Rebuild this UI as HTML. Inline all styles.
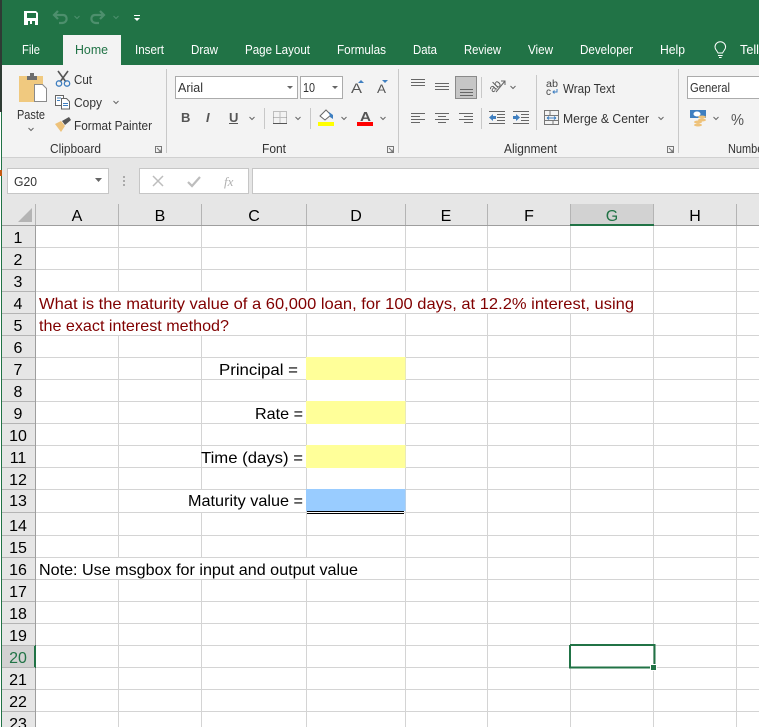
<!DOCTYPE html>
<html><head><meta charset="utf-8">
<style>
html,body{margin:0;padding:0;background:#fff;width:759px;height:727px;overflow:hidden}
svg{display:block}
text{font-family:"Liberation Sans",Arial,sans-serif}
.t{font-size:12.500px;fill:#fff}
.r{font-size:12.500px;fill:#333}
.g{font-size:16px;fill:#000}
.c{font-size:16px;fill:#000;text-anchor:middle}
.m{font-size:16px;fill:#800000}
.ch{fill:none;stroke:#666;stroke-width:1}
.ln{fill:none;stroke:#666;stroke-width:1}
</style></head>
<body>
<svg width="759" height="727" viewBox="0 0 759 727" xmlns="http://www.w3.org/2000/svg">
<!-- title + tabs -->
<rect width="759" height="65" fill="#217346"/>
<rect x="0" y="0" width="2" height="112" fill="#2e3b34"/>
<rect x="63" y="35" width="58" height="30" fill="#f3f3f3"/>
<!-- QAT -->
<path d="M24 11h12l2 2v12H24z" fill="#fff"/>
<path d="M27 13h9v5h-9z" fill="#217346"/>
<path d="M28 21h7v4h-7z" fill="#217346"/><path d="M30 21h2v3h-2z" fill="#fff"/>
<path d="M58 11l-4 4 4 4M54 15h9c5 0 5 8-1 8h-3" fill="none" stroke="#4d8f6d" stroke-width="2.200"/>
<path d="M100 11l4 4-4 4M104 15h-9c-5 0-5 8 1 8h3" fill="none" stroke="#4d8f6d" stroke-width="2.200"/>
<path d="M74.500 16l2.500 2.500 2.500-2.500M113.500 16l2.500 2.500 2.500-2.500" fill="none" stroke="#4d8f6d" stroke-width="1"/>
<rect x="134" y="15" width="6" height="1" fill="#fff"/><path d="M134 18h6l-3 3z" fill="#fff"/>
<!-- tabs text -->
<text class="t" x="22" y="54" textLength="18" lengthAdjust="spacingAndGlyphs">File</text>
<text class="t" x="75" y="54" textLength="33" lengthAdjust="spacingAndGlyphs" style="fill:#217346">Home</text>
<text class="t" x="135" y="54" textLength="29" lengthAdjust="spacingAndGlyphs">Insert</text>
<text class="t" x="191" y="54" textLength="27" lengthAdjust="spacingAndGlyphs">Draw</text>
<text class="t" x="245" y="54" textLength="65" lengthAdjust="spacingAndGlyphs">Page Layout</text>
<text class="t" x="337" y="54" textLength="49" lengthAdjust="spacingAndGlyphs">Formulas</text>
<text class="t" x="413" y="54" textLength="24" lengthAdjust="spacingAndGlyphs">Data</text>
<text class="t" x="464" y="54" textLength="37" lengthAdjust="spacingAndGlyphs">Review</text>
<text class="t" x="528" y="54" textLength="25" lengthAdjust="spacingAndGlyphs">View</text>
<text class="t" x="580" y="54" textLength="53" lengthAdjust="spacingAndGlyphs">Developer</text>
<text class="t" x="660" y="54" textLength="25" lengthAdjust="spacingAndGlyphs">Help</text>
<text class="t" x="740" y="54" textLength="19" lengthAdjust="spacingAndGlyphs">Tell</text>
<path d="M718 53c-1-2.500-3-3.500-3-6a5.300 5.300 0 0 1 10.600 0c0 2.500-2 3.500-3 6zM718 55.500h4.600M719 57.500h2.600" fill="none" stroke="#fff" stroke-width="1"/>

<!-- ribbon -->
<rect x="2" y="65" width="757" height="92" fill="#f3f3f3"/>
<rect x="2" y="157" width="757" height="1" fill="#d0d0d0"/>
<rect x="2" y="158" width="757" height="47" fill="#e6e6e6"/>
<!-- separators -->
<rect x="166" y="69" width="1" height="84" fill="#c8c8c8"/>
<rect x="398" y="69" width="1" height="84" fill="#c8c8c8"/>
<rect x="678" y="69" width="1" height="84" fill="#c8c8c8"/>
<!-- Paste -->
<path d="M19 76h24v9h-9v17H19z" fill="#f0c97f"/>
<path d="M27 76h10v4H27z" fill="#6e6e6e"/><path d="M30 73h4v4h-4z" fill="#6e6e6e"/>
<path d="M34.500 84.500h8l4 4v13h-12z" fill="#fff" stroke="#8a8a8a"/>
<text class="r" x="17" y="119" textLength="28" lengthAdjust="spacingAndGlyphs">Paste</text>
<path class="ch" d="M28.500 128l2.500 2.500 2.500-2.500"/>
<!-- Cut -->
<path d="M58 71l8 11M68 71l-8 11" fill="none" stroke="#555" stroke-width="1.600"/>
<circle cx="59" cy="83.500" r="2.700" fill="none" stroke="#3f7fc0" stroke-width="1.300"/>
<circle cx="67" cy="83.500" r="2.700" fill="none" stroke="#3f7fc0" stroke-width="1.300"/>
<text class="r" x="74" y="84" textLength="18" lengthAdjust="spacingAndGlyphs">Cut</text>
<!-- Copy -->
<path d="M55.500 95.500h8v10h-8z" fill="#fff" stroke="#666"/>
<path d="M61.500 98.500h5l3 3v7.500h-8z" fill="#fff" stroke="#666"/>
<path d="M57 98h4M57 100.500h3M63 103.500h5M63 105.500h5" stroke="#3f7fc0" fill="none"/>
<text class="r" x="74" y="107" textLength="28" lengthAdjust="spacingAndGlyphs">Copy</text>
<path class="ch" d="M113.500 101l2.500 2.500 2.500-2.500"/>
<!-- Format painter -->
<path d="M55 124l6-3 4 5-4 6z" fill="#eec27a"/>
<path d="M62 121l7-4 2 3-6 5z" fill="#555"/>
<text class="r" x="74" y="130" textLength="78" lengthAdjust="spacingAndGlyphs">Format Painter</text>
<text class="r" x="50" y="153" textLength="51" lengthAdjust="spacingAndGlyphs">Clipboard</text>
<path d="M155.500 146.500h6v6h-6zM157 148l4 4M161 149.500v2.500h-2.500" fill="none" stroke="#777"/>
<!-- Font box -->
<rect x="175.500" y="76.500" width="122" height="22" fill="#fff" stroke="#ababab"/>
<text class="r" x="178" y="92" textLength="25" lengthAdjust="spacingAndGlyphs">Arial</text>
<path d="M287 86h6l-3 3z" fill="#666"/>
<rect x="300.500" y="76.500" width="42" height="22" fill="#fff" stroke="#ababab"/>
<text class="r" x="303" y="92" textLength="12" lengthAdjust="spacingAndGlyphs">10</text>
<path d="M332 86h6l-3 3z" fill="#666"/>
<text x="351" y="93" font-size="14" fill="#555" textLength="11" lengthAdjust="spacingAndGlyphs">A</text>
<path d="M358 83h6l-3-3z" fill="#3f7fc0"/>
<text x="377" y="93" font-size="12" fill="#555" textLength="9" lengthAdjust="spacingAndGlyphs">A</text>
<path d="M382 80h6l-3 3z" fill="#3f7fc0"/>
<text x="181" y="122" font-size="13" font-weight="bold" fill="#555">B</text>
<text x="206" y="122" font-size="13" font-style="italic" font-weight="bold" fill="#555">I</text>
<text x="229" y="122" font-size="13" font-weight="bold" fill="#555">U</text>
<rect x="229" y="123" width="9" height="1" fill="#555"/>
<path class="ch" d="M249.500 117l2.500 2.500 2.500-2.500"/>
<rect x="264" y="108" width="1" height="21" fill="#c8c8c8"/>
<path d="M273.500 111.500h13v12h-13zM280 111.500v12M273.500 117.500h13" fill="none" stroke="#888" stroke-dasharray="1 1"/>
<rect x="273" y="123" width="14" height="1" fill="#555"/>
<path class="ch" d="M295.500 117l2.500 2.500 2.500-2.500"/>
<rect x="310" y="108" width="1" height="21" fill="#c8c8c8"/>
<path d="M320 116l6-6 5 5-6 5z" fill="#fff" stroke="#666"/><path d="M329 112l4 3v4l-3-2z" fill="#3f7fc0"/>
<rect x="318" y="122" width="16" height="4" fill="#ffff00"/>
<path class="ch" d="M341.500 117l2.500 2.500 2.500-2.500"/>
<text x="360" y="121" font-size="13" font-weight="bold" fill="#555" textLength="11" lengthAdjust="spacingAndGlyphs">A</text>
<rect x="357" y="122" width="16" height="4" fill="#ff0000"/>
<path class="ch" d="M380.500 117l2.500 2.500 2.500-2.500"/>
<text class="r" x="262" y="153" textLength="24" lengthAdjust="spacingAndGlyphs">Font</text>
<path d="M387.500 146.500h6v6h-6zM389 148l4 4M393 149.500v2.500h-2.500" fill="none" stroke="#777"/>
<!-- Alignment -->
<path class="ln" d="M411 79.500h14M411 82.500h14M411 85.500h14"/>
<path class="ln" d="M435 83.500h14M435 86.500h14M435 89.500h14"/>
<rect x="455.500" y="76.500" width="21" height="22" fill="#c6c6c6" stroke="#8a8a8a"/>
<path class="ln" d="M460 89.500h13M460 92.500h13M460 95.500h13"/>
<rect x="481" y="77" width="1" height="21" fill="#c8c8c8"/>
<text x="0" y="0" font-size="11" fill="#555" transform="translate(493,93) rotate(-45)">ab</text>
<path d="M496 92l9-11M501 81h4v4" fill="none" stroke="#666"/>
<path class="ch" d="M510.500 86l2.500 2.500 2.500-2.500"/>
<rect x="536" y="75" width="1" height="55" fill="#c8c8c8"/>
<text x="546" y="87" font-size="10" fill="#444" textLength="12" lengthAdjust="spacingAndGlyphs">ab</text>
<text x="546" y="95" font-size="10" fill="#444">c</text>
<path d="M557 89v3h-4M554.500 90.500l-1.500 1.500 1.500 1.500" fill="none" stroke="#3f7fc0"/>
<text class="r" x="563" y="93" textLength="52" lengthAdjust="spacingAndGlyphs">Wrap Text</text>
<path class="ln" d="M411 113.500h14M411 116.500h9M411 119.500h14M411 122.500h9"/>
<path class="ln" d="M435 113.500h14M438 116.500h8M435 119.500h14M438 122.500h8"/>
<path class="ln" d="M459 113.500h14M464 116.500h9M459 119.500h14M464 122.500h9"/>
<rect x="481" y="108" width="1" height="21" fill="#c8c8c8"/>
<path class="ln" d="M489 111.500h16M497 114.500h8M497 117.500h8M497 120.500h8M489 123.500h16"/>
<path d="M489 117.500l4-3.500v2h3v3h-3v2z" fill="#3f7fc0"/>
<path class="ln" d="M513 111.500h16M521 114.500h8M521 117.500h8M521 120.500h8M513 123.500h16"/>
<path d="M520 117.500l-4-3.500v2h-3v3h3v2z" fill="#3f7fc0"/>
<path d="M544.500 110.500h14v14h-14zM544.500 115.500h14M544.500 120.500h14M550 110.500v5M553 120.500v4" fill="none" stroke="#777"/>
<path d="M547 118h9M547 118l2-1.500M547 118l2 1.500M556 118l-2-1.500M556 118l-2 1.500" fill="none" stroke="#3f7fc0"/>
<text class="r" x="563" y="123" textLength="86" lengthAdjust="spacingAndGlyphs">Merge &amp; Center</text>
<path class="ch" d="M658.500 117l2.500 2.500 2.500-2.500"/>
<text class="r" x="504" y="153" textLength="53" lengthAdjust="spacingAndGlyphs">Alignment</text>
<path d="M667.500 146.500h6v6h-6zM669 148l4 4M673 149.500v2.500h-2.500" fill="none" stroke="#777"/>
<!-- Number -->
<rect x="687.500" y="76.500" width="80" height="22" fill="#fff" stroke="#ababab"/>
<text class="r" x="690" y="92" textLength="40" lengthAdjust="spacingAndGlyphs">General</text>
<rect x="690" y="110" width="16" height="8" fill="#3f7fc0"/>
<ellipse cx="697" cy="114" rx="3.500" ry="2.500" fill="#fff"/>
<ellipse cx="702" cy="117" rx="4" ry="1.500" fill="#eec27a"/>
<ellipse cx="702" cy="120" rx="4" ry="1.500" fill="#eec27a"/>
<ellipse cx="698" cy="122" rx="4" ry="1.500" fill="#eec27a"/>
<ellipse cx="698" cy="125" rx="4" ry="1.500" fill="#eec27a"/>
<path class="ch" d="M713.500 117l2.500 2.500 2.500-2.500"/>
<text x="731" y="125" font-size="16" fill="#555" textLength="13" lengthAdjust="spacingAndGlyphs">%</text>
<text class="r" x="728" y="153" textLength="39" lengthAdjust="spacingAndGlyphs">Number</text>

<!-- formula bar -->
<rect x="7.500" y="168.500" width="101" height="25" fill="#fff" stroke="#c6c6c6"/>
<text class="r" x="14" y="186" textLength="23" lengthAdjust="spacingAndGlyphs">G20</text>
<path d="M95 178h7l-3.500 4z" fill="#666"/>
<rect x="123" y="176" width="2" height="2" fill="#aaa"/><rect x="123" y="180" width="2" height="2" fill="#aaa"/><rect x="123" y="184" width="2" height="2" fill="#aaa"/>
<rect x="139.500" y="168.500" width="109" height="25" fill="#fff" stroke="#c6c6c6"/>
<path d="M153 176l10 10M163 176l-10 10" fill="none" stroke="#bdbdbd" stroke-width="1.500"/>
<path d="M188 182l4 4 8-9" fill="none" stroke="#bdbdbd" stroke-width="2.200"/>
<text x="224" y="186" font-size="13" font-style="italic" fill="#b0b0b0" style="font-family:'Liberation Serif',serif">fx</text>
<rect x="252.500" y="168.500" width="520" height="25" fill="#fff" stroke="#c6c6c6"/>

<!-- column headers -->
<rect x="2" y="205" width="757" height="20" fill="#e6e6e6"/>
<rect x="570" y="204" width="84" height="21" fill="#d2d2d2"/>
<path d="M32 208v14H18z" fill="#b4b4b4"/>
<path d="M35.500 204v21M118.500 204v21M201.500 204v21M306.500 204v21M405.500 204v21M487.500 204v21M570.500 204v21M653.500 204v21M736.500 204v21" stroke="#b4b4b4" fill="none"/>
<rect x="2" y="225" width="757" height="1" fill="#9e9e9e"/>
<rect x="570" y="224" width="84" height="2" fill="#217346"/>
<text class="c" x="77" y="221">A</text>
<text class="c" x="160" y="221">B</text>
<text class="c" x="254" y="221">C</text>
<text class="c" x="356" y="221">D</text>
<text class="c" x="446" y="221">E</text>
<text class="c" x="529" y="221">F</text>
<text class="c" x="612" y="221" style="fill:#217346">G</text>
<text class="c" x="695" y="221">H</text>

<!-- row header -->
<rect x="2" y="226" width="33" height="501" fill="#e6e6e6"/>
<rect x="2" y="645" width="33" height="23" fill="#d2d2d2"/>
<rect x="35" y="226" width="1" height="501" fill="#9e9e9e"/>
<rect x="34" y="645" width="2" height="23" fill="#217346"/>
<rect x="0" y="112" width="1" height="615" fill="#fff"/>
<rect x="1" y="112" width="1" height="615" fill="#217346"/>
<rect x="0" y="170" width="2" height="6" fill="#c55a11"/>
<path stroke="#b4b4b4" fill="none" d="M2 247.500h33M2 269.500h33M2 291.500h33M2 313.500h33M2 335.500h33M2 357.500h33M2 379.500h33M2 401.500h33M2 423.500h33M2 445.500h33M2 467.500h33M2 489.500h33M2 512.500h33M2 535.500h33M2 557.500h33M2 579.500h33M2 601.500h33M2 623.500h33M2 645.500h33M2 667.500h33M2 689.500h33M2 711.500h33"/>
<g class="c">
<text class="c" x="18" y="243">1</text>
<text class="c" x="18" y="265">2</text>
<text class="c" x="18" y="287">3</text>
<text class="c" x="18" y="309">4</text>
<text class="c" x="18" y="331">5</text>
<text class="c" x="18" y="353">6</text>
<text class="c" x="18" y="375">7</text>
<text class="c" x="18" y="397">8</text>
<text class="c" x="18" y="419">9</text>
<text class="c" x="18" y="441">10</text>
<text class="c" x="18" y="463">11</text>
<text class="c" x="18" y="485">12</text>
<text class="c" x="18" y="506">13</text>
<text class="c" x="18" y="531">14</text>
<text class="c" x="18" y="553">15</text>
<text class="c" x="18" y="575">16</text>
<text class="c" x="18" y="597">17</text>
<text class="c" x="18" y="619">18</text>
<text class="c" x="18" y="641">19</text>
<text class="c" x="18" y="663" style="fill:#217346">20</text>
<text class="c" x="18" y="685">21</text>
<text class="c" x="18" y="707">22</text>
<text class="c" x="18" y="729">23</text>
</g>

<!-- grid -->
<path stroke="#d4d4d4" fill="none" d="M36 247.500h723M36 269.500h723M36 291.500h723M36 313.500h723M36 335.500h723M36 357.500h723M36 379.500h723M36 401.500h723M36 423.500h723M36 445.500h723M36 467.500h723M36 489.500h723M36 512.500h723M36 535.500h723M36 557.500h723M36 579.500h723M36 601.500h723M36 623.500h723M36 645.500h723M36 667.500h723M36 689.500h723M36 711.500h723"/>
<path stroke="#d4d4d4" fill="none" d="M118.500 226v501M201.500 226v501M306.500 226v501M405.500 226v501M487.500 226v501M570.500 226v501M653.500 226v501M736.500 226v501"/>
<!-- hide gridlines under overflow text -->
<g fill="#fff">
<rect x="118" y="292" width="1" height="21"/><rect x="201" y="292" width="1" height="21"/><rect x="306" y="292" width="1" height="21"/><rect x="405" y="292" width="1" height="21"/><rect x="487" y="292" width="1" height="21"/><rect x="570" y="292" width="1" height="21"/>
<rect x="118" y="314" width="1" height="21"/><rect x="201" y="314" width="1" height="21"/>
<rect x="201" y="490" width="1" height="22"/>
<rect x="118" y="558" width="1" height="21"/><rect x="201" y="558" width="1" height="21"/><rect x="306" y="558" width="1" height="21"/>
</g>
<!-- filled cells -->
<rect x="306" y="357" width="99.500" height="23" fill="#ffff99"/>
<rect x="306" y="401" width="99.500" height="23" fill="#ffff99"/>
<rect x="306" y="445" width="99.500" height="23" fill="#ffff99"/>
<rect x="306" y="489" width="99.500" height="22" fill="#99ccff"/>
<rect x="307" y="511" width="97" height="1" fill="#000"/>
<rect x="307" y="512" width="97" height="1" fill="#fff"/>
<rect x="307" y="513" width="97" height="1" fill="#000"/>
<!-- cell text -->
<text class="m" x="39" y="309" textLength="595" lengthAdjust="spacingAndGlyphs">What is the maturity value of a 60,000 loan, for 100 days, at 12.2% interest, using</text>
<text class="m" x="39" y="331" textLength="190" lengthAdjust="spacingAndGlyphs">the exact interest method?</text>
<text class="g" x="219" y="375" textLength="79" lengthAdjust="spacingAndGlyphs">Principal =</text>
<text class="g" x="255" y="419" textLength="48" lengthAdjust="spacingAndGlyphs">Rate =</text>
<text class="g" x="201" y="463" textLength="102" lengthAdjust="spacingAndGlyphs">Time (days) =</text>
<text class="g" x="188" y="506" textLength="115" lengthAdjust="spacingAndGlyphs">Maturity value =</text>
<text class="g" x="39" y="575" textLength="319" lengthAdjust="spacingAndGlyphs">Note: Use msgbox for input and output value</text>
<!-- selection -->
<path d="M570 645H654.500V664M650 667.500H570V645" fill="none" stroke="#217346" stroke-width="2"/>
<rect x="650" y="664" width="7" height="7" fill="#fff"/>
<rect x="651" y="665" width="5" height="5" fill="#217346"/>
</svg>
</body></html>
